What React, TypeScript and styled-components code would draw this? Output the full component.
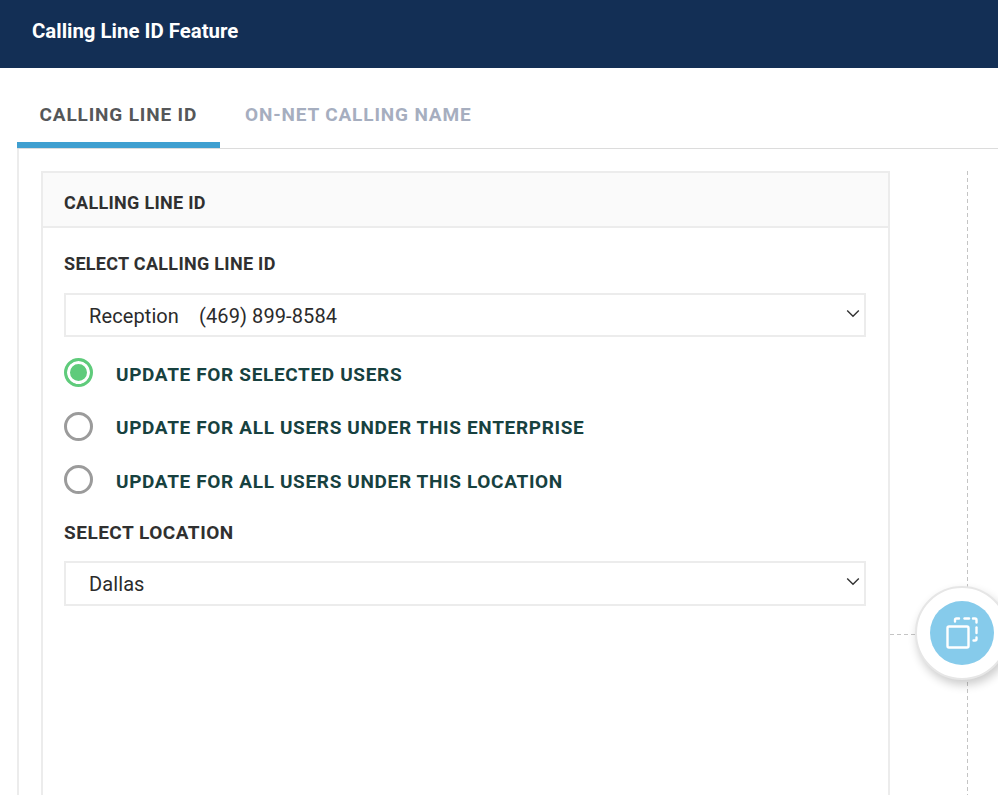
import styled, { createGlobalStyle } from "styled-components";

const GlobalStyle = createGlobalStyle`
  html, body {
    margin: 0;
    padding: 0;
    background: #fff;
    overflow: hidden;
  }
  body {
    font-family: Roboto, "Liberation Sans", sans-serif;
  }
`;

const Chevron = () => (
  <ChevronSvg viewBox="0 0 14 9" fill="none">
    <path d="M1.2 1.4 L7 7.2 L12.8 1.4" stroke="#333" strokeWidth="1.4" />
  </ChevronSvg>
);

const SelectBox = ({ children, tall }: { children: React.ReactNode; tall?: boolean }) => (
  <Select $tall={tall}>
    <SelectText>{children}</SelectText>
    <Chevron />
  </Select>
);

const App = () => {
  return (
    <>
      <GlobalStyle />
      <Page>
        <TopBar>Calling Line ID Feature</TopBar>
        <Tabs>
          <Tab $active>CALLING LINE ID</Tab>
          <Tab>ON-NET CALLING NAME</Tab>
        </Tabs>
        <Body>
          <Card>
            <CardHeader>CALLING LINE ID</CardHeader>
            <CardBody>
              <FieldLabel>SELECT CALLING LINE ID</FieldLabel>
              <SelectBox>
                <span>Reception</span>
                <span>(469) 899-8584</span>
              </SelectBox>
              <RadioGroup>
                <RadioRow>
                  <Radio $checked />
                  UPDATE FOR SELECTED USERS
                </RadioRow>
                <RadioRow>
                  <Radio />
                  UPDATE FOR ALL USERS UNDER THIS ENTERPRISE
                </RadioRow>
                <RadioRow>
                  <Radio />
                  UPDATE FOR ALL USERS UNDER THIS LOCATION
                </RadioRow>
              </RadioGroup>
              <FieldLabel $large>SELECT LOCATION</FieldLabel>
              <SelectBox tall>
                <span>Dallas</span>
              </SelectBox>
            </CardBody>
          </Card>
          <Rail />
          <Connector />
          <FloatButton>
            <BlueDot>
              <svg width="36" height="36" viewBox="0 0 36 36" fill="none" stroke="#fff" strokeWidth="2.4">
                <rect x="3.5" y="11.5" width="21" height="21" rx="1.5" />
                <path d="M11 6.5 V5 Q11 3.5 12.5 3.5 H15" strokeLinecap="round" />
                <path d="M20.5 3.5 H25" strokeLinecap="round" />
                <path d="M29 3.5 H31 Q32.5 3.5 32.5 5 V7.5" strokeLinecap="round" />
                <path d="M32.5 12.5 V18" strokeLinecap="round" />
                <path d="M32.5 22.5 V24 Q32.5 25.5 31 25.5 H29.5" strokeLinecap="round" />
              </svg>
            </BlueDot>
          </FloatButton>
        </Body>
      </Page>
    </>
  );
};

export default App;

const Page = styled.div`
  width: 998px;
  height: 795px;
  overflow: hidden;
  position: relative;
`;

const TopBar = styled.header`
  height: 68px;
  background-color: #132f55;
  color: #fff;
  font-size: 20.4px;
  font-weight: 700;
  line-height: 62px;
  padding-left: 32px;
`;

const Tabs = styled.nav`
  display: flex;
  height: 81px;
  margin-left: 17px;
  box-sizing: border-box;
  border-bottom: 1px solid #dcdcdc;
`;

const Tab = styled.div<{ $active?: boolean }>`
  box-sizing: border-box;
  height: 80px;
  width: ${(p) => (p.$active ? "203px" : "auto")};
  padding: 35px 0 0 ${(p) => (p.$active ? "22.5px" : "25px")};
  font-size: 19px;
  line-height: 24px;
  font-weight: 700;
  letter-spacing: 0.85px;
  color: ${(p) => (p.$active ? "#555759" : "#a6aebf")};
  border-bottom: ${(p) => (p.$active ? "6px solid #3f9fd0" : "none")};
`;

const Body = styled.main`
  position: relative;
  margin-left: 17px;
  height: 646px;
  box-sizing: border-box;
  border-left: 2px solid #ececec;
  padding: 22px 0 0 22px;
`;

const Card = styled.section`
  width: 849px;
  height: 700px;
  box-sizing: border-box;
  border: 2px solid #ececec;
`;

const CardHeader = styled.div`
  box-sizing: border-box;
  height: 55px;
  background-color: #fafafa;
  border-bottom: 2px solid #ececec;
  padding-left: 21px;
  font-size: 18px;
  font-weight: 700;
  letter-spacing: 0.3px;
  line-height: 60px;
  color: #303030;
`;

const CardBody = styled.div`
  padding: 25px 22px 0 21px;
`;

const FieldLabel = styled.div<{ $large?: boolean }>`
  font-size: ${(p) => (p.$large ? "19px" : "18px")};
  font-weight: 700;
  letter-spacing: ${(p) => (p.$large ? "0.5px" : "0.3px")};
  line-height: ${(p) => (p.$large ? "21px" : "22px")};
  color: #303030;
`;

const Select = styled.div<{ $tall?: boolean }>`
  display: flex;
  align-items: center;
  justify-content: space-between;
  box-sizing: border-box;
  height: ${(p) => (p.$tall ? "45px" : "44px")};
  margin-top: 18px;
  padding: 0 4px 0 23px;
  border: 2px solid #ececec;
  color: #2b2b2b;
  font-size: 20px;
  letter-spacing: 0.1px;
`;

const SelectText = styled.div`
  display: flex;
  gap: 20px;
  padding-top: 2px;
`;

const ChevronSvg = styled.svg`
  width: 14px;
  height: 9px;
  margin-top: -3px;
`;

const RadioGroup = styled.div`
  display: flex;
  flex-direction: column;
  gap: 23.5px;
  margin: 22.4px 0 25.6px;
`;

const RadioRow = styled.label`
  display: flex;
  align-items: center;
  gap: 23px;
  height: 30px;
  font-size: 19px;
  font-weight: 700;
  letter-spacing: 0.65px;
  color: #17413f;
`;

const Radio = styled.span<{ $checked?: boolean }>`
  box-sizing: border-box;
  flex: none;
  width: 29px;
  height: 29px;
  margin-top: -3px;
  border-radius: 50%;
  border: 3px solid ${(p) => (p.$checked ? "#5fcb7b" : "#9b9b9b")};
  background: ${(p) => (p.$checked ? "#5fcb7b" : "#fff")};
  box-shadow: ${(p) => (p.$checked ? "inset 0 0 0 3px #fff" : "none")};
`;

const Rail = styled.div`
  position: absolute;
  left: 948px;
  top: 22px;
  bottom: 0;
  width: 1px;
  background: repeating-linear-gradient(to bottom, #c4c4c4 0 4px, transparent 4px 7px);
`;

const Connector = styled.div`
  position: absolute;
  left: 871px;
  top: 485px;
  width: 30px;
  height: 1px;
  background: repeating-linear-gradient(to right, #c4c4c4 0 4px, transparent 4px 7px);
`;

const FloatButton = styled.div`
  position: absolute;
  left: 896px;
  top: 437px;
  width: 94px;
  height: 94px;
  box-sizing: border-box;
  border-radius: 50%;
  background: #fff;
  border: 2px solid #e6e6e6;
  box-shadow: 2px 5px 10px rgba(0, 0, 0, 0.2);
  display: flex;
  align-items: center;
  justify-content: center;
`;

const BlueDot = styled.div`
  width: 64px;
  height: 64px;
  border-radius: 50%;
  background: #86cbeb;
  display: flex;
  align-items: center;
  justify-content: center;
`;
